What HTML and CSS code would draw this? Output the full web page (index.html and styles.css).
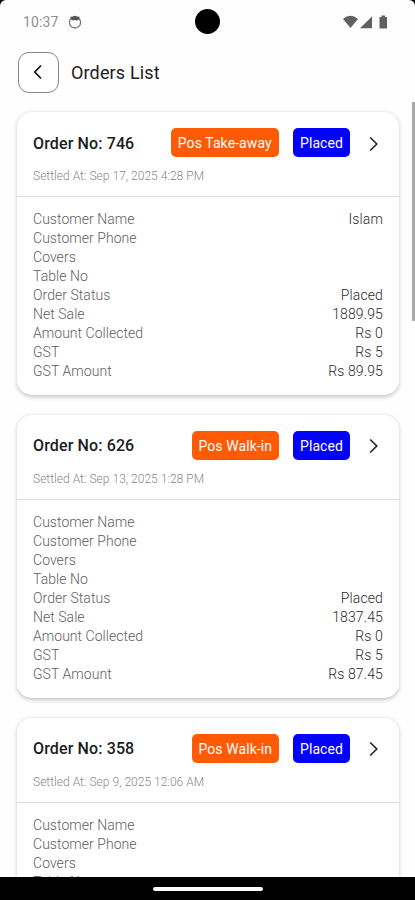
FILE: index.html
```html
<!DOCTYPE html>
<html lang="en">
<head>
<meta charset="utf-8">
<title>Orders List</title>
<link rel="stylesheet" href="styles.css">
</head>
<body>
<div class="screen">
  <div class="status">
    <span class="time">10:37</span>
    <svg class="notice" width="14" height="14" viewBox="0 0 14 14"><circle cx="7" cy="7.400" r="5.600" fill="none" stroke="#777" stroke-width="1.300"/><path d="M2.500 1.500L4.500 1.800 7 .8 9.500 1.800 11.500 1.500 11 4.600 8.800 5.600 7 5 5.200 5.600 3 4.600z" fill="#555"/></svg>
    <span class="camera"></span>
    <svg class="signals" width="46" height="14" viewBox="0 0 46 14" fill="#606060"><path d="M0 4Q7.500-2.400 15 4L7.500 13z"/><path d="M17 13.300L29 1.500V13.300z"/><path d="M36.500 2h2V.5h3.500V2h2v11.500h-7.500z"/></svg>
  </div>
  <header class="header">
    <button class="back" aria-label="Back"><svg width="10" height="16" viewBox="0 0 10 16"><path d="M8 1.500L1.800 8 8 14.500" fill="none" stroke="#111" stroke-width="1.700"/></svg></button>
    <h1>Orders List</h1>
  </header>
  <main class="list">
    <section class="card">
      <div class="top">
        <div class="line"><h2>Order No: 746</h2><span class="badge away">Pos Take-away</span><span class="badge placed">Placed</span><svg class="chev" width="10" height="16" viewBox="0 0 10 16"><path d="M1.200 1.500L7.800 8 1.200 14.500"/></svg></div>
        <p>Settled At: Sep 17, 2025 4:28 PM</p>
      </div>
      <dl>
        <div><dt>Customer Name</dt><dd>Islam</dd></div>
        <div><dt>Customer Phone</dt><dd></dd></div>
        <div><dt>Covers</dt><dd></dd></div>
        <div><dt>Table No</dt><dd></dd></div>
        <div><dt>Order Status</dt><dd>Placed</dd></div>
        <div><dt>Net Sale</dt><dd>1889.95</dd></div>
        <div><dt>Amount Collected</dt><dd>Rs 0</dd></div>
        <div><dt>GST</dt><dd>Rs 5</dd></div>
        <div><dt>GST Amount</dt><dd>Rs 89.95</dd></div>
      </dl>
    </section>
    <section class="card">
      <div class="top">
        <div class="line"><h2>Order No: 626</h2><span class="badge walk">Pos Walk-in</span><span class="badge placed">Placed</span><svg class="chev" width="10" height="16" viewBox="0 0 10 16"><path d="M1.200 1.500L7.800 8 1.200 14.500"/></svg></div>
        <p>Settled At: Sep 13, 2025 1:28 PM</p>
      </div>
      <dl>
        <div><dt>Customer Name</dt><dd></dd></div>
        <div><dt>Customer Phone</dt><dd></dd></div>
        <div><dt>Covers</dt><dd></dd></div>
        <div><dt>Table No</dt><dd></dd></div>
        <div><dt>Order Status</dt><dd>Placed</dd></div>
        <div><dt>Net Sale</dt><dd>1837.45</dd></div>
        <div><dt>Amount Collected</dt><dd>Rs 0</dd></div>
        <div><dt>GST</dt><dd>Rs 5</dd></div>
        <div><dt>GST Amount</dt><dd>Rs 87.45</dd></div>
      </dl>
    </section>
    <section class="card">
      <div class="top">
        <div class="line"><h2>Order No: 358</h2><span class="badge walk">Pos Walk-in</span><span class="badge placed">Placed</span><svg class="chev" width="10" height="16" viewBox="0 0 10 16"><path d="M1.200 1.500L7.800 8 1.200 14.500"/></svg></div>
        <p>Settled At: Sep 9, 2025 12:06 AM</p>
      </div>
      <dl>
        <div><dt>Customer Name</dt><dd></dd></div>
        <div><dt>Customer Phone</dt><dd></dd></div>
        <div><dt>Covers</dt><dd></dd></div>
        <div><dt>Table No</dt><dd></dd></div>
      </dl>
    </section>
  </main>
  <div class="scrollbar"></div>
  <footer class="nav"><span></span></footer>
</div>
</body>
</html>
```
FILE: styles.css
```css
* { box-sizing: border-box; margin: 0; padding: 0; }
body { background: #000; font-family: Roboto, sans-serif; overflow: hidden; }
.screen { position: relative; display: flex; flex-direction: column; width: 415px; height: 900px; overflow: hidden; background: #fefefe; border-radius: 6px 6px 0 0; }
.status { position: relative; display: flex; align-items: center; height: 43px; flex: none; padding: 0 26px 0 23px; }
.time { width: 36px; font-size: 14px; color: #909090; letter-spacing: 0.1px; }
.notice { margin-left: 9px; }
.camera { position: absolute; left: 195px; top: 9px; width: 25px; height: 25px; border-radius: 50%; background: #000; }
.signals { margin-left: auto; }
.header { display: flex; align-items: center; gap: 13px; height: 58px; flex: none; padding-left: 18px; }
.back { display: flex; align-items: center; justify-content: center; width: 41px; height: 41px; padding-right: 2px; background: #fff; border: 1px solid #85858f; border-radius: 11px; }
h1 { margin-left: -1px; font-size: 18px; font-weight: 400; color: #1c1c1c; letter-spacing: 0.15px; }
.list { flex: 1; min-height: 0; overflow: hidden; padding: 11px 16px 0 17px; }
.card { height: 283px; margin-bottom: 19.800px; background: #fff; border-radius: 15px; box-shadow: 0 1.500px 4px rgba(0, 0, 0, 0.23); }
.top { height: 85px; padding: 16px 16px 0; border-bottom: 1px solid #dcdcdc; }
.line { display: flex; align-items: center; height: 29px; }
h2 { flex: 1; padding-top: 1px; font-size: 16px; font-weight: 500; color: #1c1c1c; letter-spacing: 0.13px; white-space: nowrap; }
.badge { height: 29px; line-height: 30px; text-align: center; font-size: 14px; letter-spacing: 0.08px; color: #fff; background: #ff5a05; border-radius: 5px; white-space: nowrap; }
.away { width: 108.500px; }
.walk { width: 87.500px; }
.placed { width: 57px; margin-left: 14px; background: #0202fa; }
.chev { margin: 2px 4px 0 19px; fill: none; stroke: #20203c; stroke-width: 1.600; }
.top p { margin-top: 12px; font-size: 12px; line-height: 14px; font-weight: 300; color: #888; letter-spacing: 0.02px; }
dl { padding: 13px 16px 0; }
dl div { display: flex; justify-content: space-between; height: 19px; line-height: 19px; font-size: 14px; font-weight: 300; letter-spacing: 0.04px; }
dt { color: #606060; }
dd { color: #2a2a2a; letter-spacing: 0.12px; }
.scrollbar { position: absolute; right: 0; top: 102px; width: 3px; height: 219px; background: #a9a9a9; }
.nav { display: flex; justify-content: center; align-items: center; flex: none; height: 23px; background: #000; }
.nav span { width: 110px; height: 4px; border-radius: 2px; background: #fff; }
```
